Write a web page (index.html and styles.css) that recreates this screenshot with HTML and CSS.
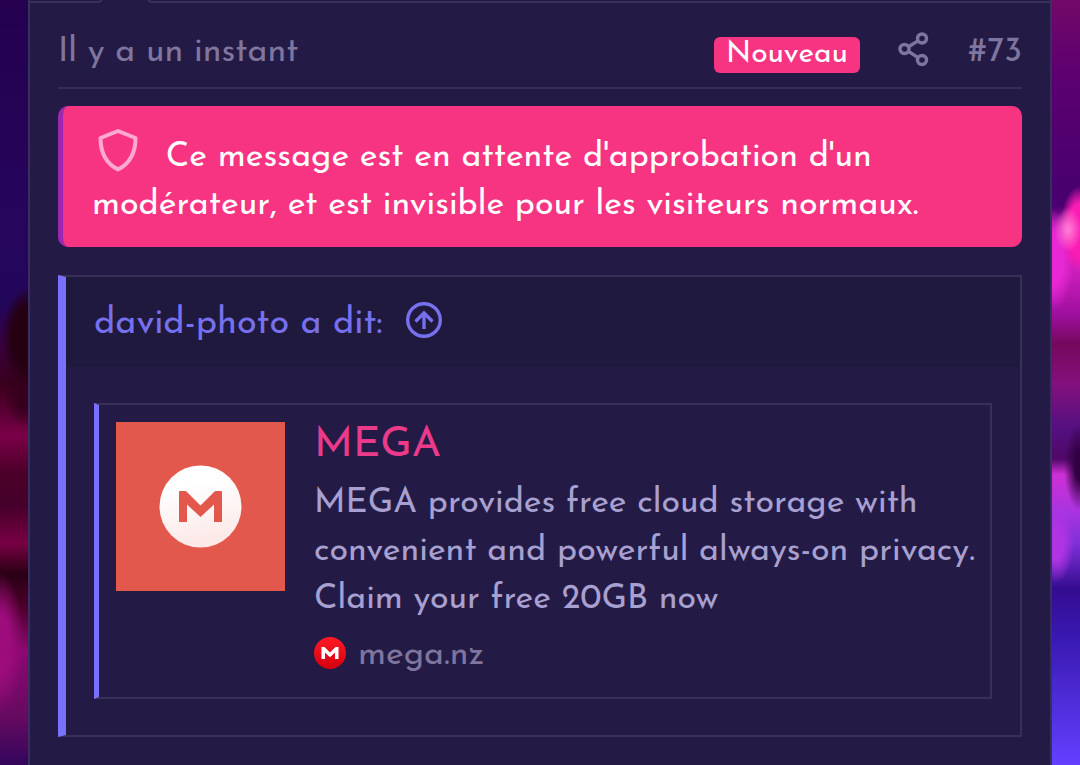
FILE: index.html
```html
<!DOCTYPE html>
<html lang="fr">
<head>
    <meta charset="UTF-8">
    <meta name="viewport" content="width=device-width, initial-scale=1.0">
    <title>Message #73</title>
    <link rel="stylesheet" href="styles.css">
</head>
<body>
    <article class="post">
        <div class="post-edge">
            <span class="edge-line edge-start"></span>
            <svg class="edge-notch" width="54" height="3" viewBox="0 0 54 3" fill="none" stroke="currentColor" stroke-width="2">
                <path d="M0 2q2 0 4-2M50 0q2 2 4 2"/>
            </svg>
            <span class="edge-line edge-end"></span>
        </div>

        <header class="post-header">
            <a class="post-date" href="#post-73"><time>Il y a un instant</time></a>
            <span class="new-badge">Nouveau</span>
            <button class="share-button" aria-label="Partager">
                <svg width="32" height="36" viewBox="0 0 32 36" fill="none" stroke="currentColor" stroke-width="3.4">
                    <circle cx="6.500" cy="17" r="4.500"/>
                    <circle cx="24" cy="6.500" r="4.500"/>
                    <circle cx="24" cy="28" r="4.500"/>
                    <path d="M10.500 14.700L20 8.900M10.500 19.300L20 25.700"/>
                </svg>
            </button>
            <a class="post-number" href="#post-73">#73</a>
        </header>

        <!-- Moderation notice -->
        <div class="notice">
            <svg class="notice-icon" width="42" height="44" viewBox="0 0 42 44" fill="none" stroke="currentColor" stroke-width="4" stroke-linejoin="round">
                <path d="M21 3L38.500 10C38.500 26 32 36 21 41.500C10 36 3.500 26 3.500 10Z"/>
            </svg>
            Ce message est en attente d'approbation d'un modérateur, et est invisible pour les visiteurs normaux.
        </div>

        <!-- Quoted message -->
        <blockquote class="quote">
            <div class="quote-header">
                <a class="quote-link" href="#quoted">david-photo a dit:
                    <svg width="38" height="38" viewBox="0 0 38 38" fill="none" stroke="currentColor" stroke-width="3.4">
                        <circle cx="19" cy="19" r="16.300"/>
                        <path d="M19 28V12M10.500 20.500L19 12L27.500 20.500"/>
                    </svg>
                </a>
            </div>
            <div class="quote-content">
                <div class="unfurl">
                    <svg class="unfurl-image" viewBox="0 0 169 169" role="img" aria-label="MEGA">
                        <defs>
                            <linearGradient id="disc" x1="0" y1="0" x2="0.2" y2="1">
                                <stop offset="0.3" stop-color="#fff"/>
                                <stop offset="1" stop-color="#fce9e8"/>
                            </linearGradient>
                        </defs>
                        <rect width="169" height="169" fill="#e2584c"/>
                        <circle cx="84.500" cy="84.500" r="41" fill="url(#disc)"/>
                        <path d="M63 100V70Q63 69 64 69H69Q70 69 71 70L84.500 83.500L98 70Q99 69 100 69H105Q106 69 106 70V100H98V82.500L84.500 95L71 82.500V100Z" fill="#e2584c"/>
                    </svg>
                    <div class="unfurl-body">
                        <h3 class="unfurl-title"><a href="#mega">MEGA</a></h3>
                        <p class="unfurl-text">MEGA provides free cloud storage with convenient and powerful always-on privacy. Claim your free 20GB now</p>
                        <div class="unfurl-source">
                            <svg width="32" height="32" viewBox="0 0 32 32">
                                <defs>
                                    <linearGradient id="favicon" x1="0" y1="0" x2="0" y2="1">
                                        <stop offset="0" stop-color="#ff1a25"/>
                                        <stop offset="1" stop-color="#d40010"/>
                                    </linearGradient>
                                </defs>
                                <circle cx="16" cy="16" r="16" fill="url(#favicon)"/>
                                <path d="M7.500 22V10H10.500L16 15.500L21.500 10H24.500V22H21V15.500L16 20.200L11 15.500V22Z" fill="#fff"/>
                            </svg>
                            <span>mega.nz</span>
                        </div>
                    </div>
                </div>
            </div>
        </blockquote>
    </article>
</body>
</html>
```

FILE: styles.css
```css
* {
    margin: 0;
    padding: 0;
    box-sizing: border-box;
}

/* Coloured smoke on both sides of the post */
body {
    min-height: 100vh;
    padding: 0 28px;
    display: flex;
    font-family: 'Josefin Sans', Lato, sans-serif;
    font-size: 34px;
    line-height: 48px;
    color: #a8a0d0;
    background-color: #241c44;
    background-image:
        radial-gradient(ellipse 26px 50px at 28px 44%, #250010 60%, transparent 100%),
        radial-gradient(ellipse 20px 30px at 24px 52%, #34001c 30%, transparent 100%),
        radial-gradient(ellipse 24px 70px at 0 84%, #9c0c7c 40%, transparent 100%),
        radial-gradient(ellipse 14px 22px at calc(100% - 12px) 30%, #ff78d4 10%, transparent 100%),
        radial-gradient(ellipse 20px 44px at 100% 30%, #fa1cb4 60%, transparent 100%),
        radial-gradient(ellipse 22px 50px at calc(100% - 28px) 34%, #e828d4 50%, transparent 100%),
        radial-gradient(ellipse 16px 44px at 100% 61%, #300040 30%, transparent 100%),
        radial-gradient(ellipse 18px 40px at calc(100% - 24px) 71%, #b034e4 40%, transparent 100%),
        linear-gradient(#24004f 0%, #25065c 30%, #22065a 40%, #38003c 45%, #38001c 50%, #7a0048 57%, #4a0028 62%, #45002a 66%, #780044 71%, #2a0014 75%, #480028 79%, #8c0870 85%, #640a60 94%, #32065c 100%),
        linear-gradient(#720868 0%, #5c0070 10%, #48006e 25%, #4c0070 27%, #d824c4 31%, #c81cb8 36%, #a010a0 41%, #74085c 45%, #84107c 50%, #541080 56%, #500868 60%, #cc30d4 62%, #a834e0 67%, #8030d8 71%, #340c90 77%, #3818b0 83%, #6440ff 100%);
    background-repeat: no-repeat;
    background-position: 0 0, 0 0, 0 0, 100% 0, 100% 0, 100% 0, 100% 0, 100% 0, 0 0, 100% 0;
    background-size: 28px 100%;
}

a {
    color: inherit;
    text-decoration: none;
}

button {
    background: none;
    border: none;
    color: inherit;
    cursor: pointer;
}

svg {
    flex-shrink: 0;
}

.post {
    flex: 1;
    min-width: 0;
    background-color: #231b45;
    border: 2px solid #392e60;
    border-width: 0 2px;
}

.post-edge {
    display: flex;
    align-items: flex-end;
    height: 3px;
    color: #3a3060;
}

.edge-line {
    height: 2px;
    background-color: #3a3060;
}

.edge-start {
    width: 68px;
}

.edge-end {
    flex: 1;
}

.post-header {
    display: flex;
    align-items: center;
    margin: 0 28px;
    height: 86px;
    padding-top: 10px;
    border-bottom: 2px solid #342b58;
    color: #7f769f;
}

.post-date,
.post-number {
    padding-top: 6px;
}

.post-date {
    margin-right: auto;
}

.new-badge {
    margin-top: 10px;
    padding: 0 12px;
    border-radius: 6px;
    background-color: #f63482;
    color: #fff;
    font-size: 30px;
    line-height: 36px;
}

.share-button {
    display: flex;
    margin: 0 38px;
}

.notice {
    margin: 17px 28px 28px;
    padding: 28px 28px 17px 29px;
    border-left: 5px solid #9c27b0;
    border-radius: 10px;
    background-color: #f63482;
    color: #fff;
}

.notice-icon {
    margin: -10px 16px 0 5px;
    vertical-align: -6px;
    color: #ffa8d2;
}

.quote {
    margin: 0 28px 28px;
    border: 2px solid #393057;
    border-left: 8px solid #7771fc;
}

.quote-header {
    padding: 23px 28px 19px;
    background-color: #1f193d;
    color: #7770ed;
    font-size: 36px;
}

.quote-link {
    display: inline-flex;
    align-items: center;
    gap: 22px;
}

.quote-link svg {
    margin-bottom: 8px;
}

.quote-content {
    padding: 36px 28px;
}

.unfurl {
    display: flex;
    gap: 29px;
    padding: 17px 12px 17px 17px;
    border: 2px solid #393057;
    border-left: 5px solid #7771fc;
}

.unfurl-image {
    width: 169px;
    height: 169px;
}

.unfurl-body {
    flex: 1;
    min-width: 0;
}

.unfurl-title {
    margin-bottom: 10px;
    color: #ec3a8b;
    font-size: 42px;
    font-weight: 400;
}

.unfurl-source {
    display: flex;
    align-items: center;
    gap: 12px;
    margin-top: 8px;
    color: #7f769f;
}

.unfurl-source svg {
    margin-bottom: 6px;
}
```
